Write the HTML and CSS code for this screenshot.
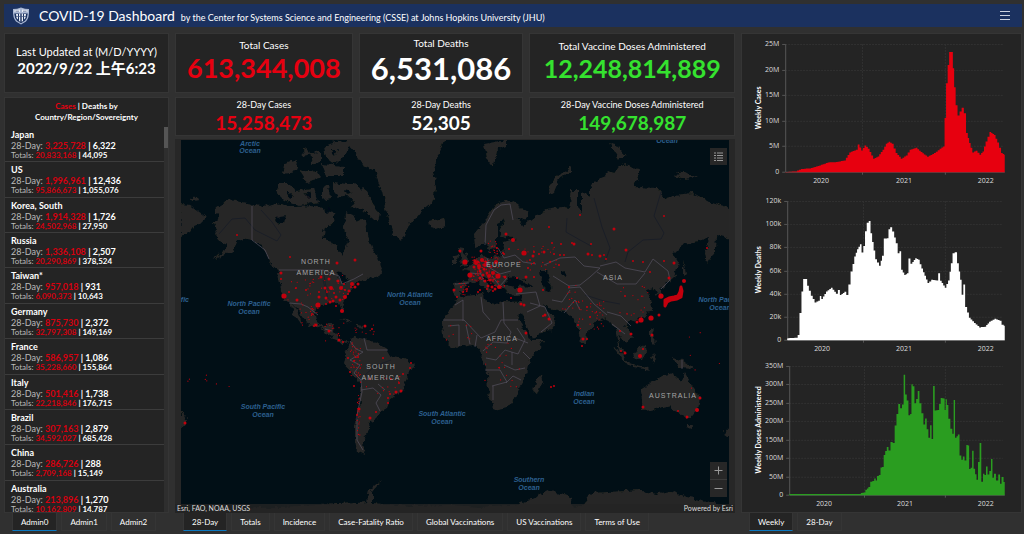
FILE: index.html
```html
<!DOCTYPE html>
<html lang="en">
<head>
<meta charset="utf-8">
<meta name="viewport" content="width=device-width, initial-scale=1">
<title>COVID-19 Dashboard</title>
<link rel="stylesheet" href="styles.css">
</head>
<body>
<header class="topbar">
  <svg class="logo" viewBox="0 0 18 18" aria-hidden="true">
    <path d="M1 2Q5 2 9 .5Q13 2 17 2Q17.500 11 14 14.500L9 17.500L4 14.500Q.5 11 1 2Z" fill="#a9b7d3"/>
    <path d="M2.300 6.500H15.700Q15.500 11 13 13.700L9 16.300L5 13.700Q2.500 11 2.300 6.500Z" fill="#1b315f"/>
    <path d="M2.500 3.200L8 2.500V5H2.500ZM10 2.500L15.500 3.200V5H10ZM4 7H6V12.500L4.500 11ZM7 6.500H8.300V14.800L7 14ZM9.700 6.500H11V14L9.700 14.800ZM12 7H14L13.500 11L12 12.500Z" fill="#e7ecf5"/>
    <path d="M3.500 4.200H7M11 4.200H14.500M4 9.500H14" stroke="#40557f" stroke-width=".7"/>
  </svg>
  <h1 class="title">COVID-19 Dashboard</h1>
  <p class="byline">by the Center for Systems Science and Engineering (CSSE) at Johns Hopkins University (JHU)</p>
  <button class="menu" aria-label="Menu"><svg viewBox="0 0 10 9"><path d="M0 .5H10M0 4.500H10M0 8.500H10"/></svg></button>
</header>

<main class="board">
  <section class="column">
    <div class="card tall updated">
      <p class="updated-label">Last Updated at (M/D/YYYY)</p>
      <p class="updated-value">2022/9/22 上午6:23</p>
    </div>
    <div class="card regions">
      <h2 class="regions-title"><span class="red">Cases</span> | Deaths by<br>Country/Region/Sovereignty</h2>
      <div class="scroller">
        <ul class="region-list" id="regions"></ul>
        <div class="track"><div class="thumb"></div></div>
      </div>
    </div>
    <nav class="tabs">
      <button class="tab active">Admin0</button><button class="tab">Admin1</button><button class="tab">Admin2</button>
    </nav>
  </section>

  <section class="column">
    <div class="stats tall">
      <div class="card stat"><h2>Total Cases</h2><p class="huge red">613,344,008</p></div>
      <div class="card stat"><h2>Total Deaths</h2><p class="giant">6,531,086</p></div>
      <div class="card stat"><h2>Total Vaccine Doses Administered</h2><p class="large green">12,248,814,889</p></div>
    </div>
    <div class="stats short">
      <div class="card stat"><h2>28-Day Cases</h2><p class="medium red">15,258,473</p></div>
      <div class="card stat"><h2>28-Day Deaths</h2><p class="medium">52,305</p></div>
      <div class="card stat"><h2>28-Day Vaccine Doses Administered</h2><p class="medium green">149,678,987</p></div>
    </div>
    <div class="map">
      <svg class="world" viewBox="181 140 548 373" preserveAspectRatio="xMidYMid slice" role="img" aria-label="World map of cases">
        <defs>
          <filter id="coast" x="0" y="0" width="100%" height="100%">
            <feTurbulence type="fractalNoise" baseFrequency=".16" numOctaves="3" seed="4"/>
            <feDisplacementMap in="SourceGraphic" scale="7" xChannelSelector="R" yChannelSelector="G"/>
          </filter>
        </defs>
        <rect x="181" y="140" width="548" height="373" fill="#010f16"/>
        <g filter="url(#coast)">
          <rect x="170" y="130" width="570" height="390" fill="none"/>
          <g fill="#272725">
            <path d="M252 204L240 202L228 199L215 210L220 217L213 222L217 230L215 235L222 243L228 245L225 250L213 259L232 251L237 240L243 238L253 240L262 246L270 262L278 271L280 285L283 297L290 304L293 312L302 325L300 316L295 308L292 304L300 312L307 323L317 328L328 333L335 340L345 344L350 342L342 340L337 335L333 331L334 323L328 323L325 328L318 325L316 314L318 306L328 304L338 303L342 313L345 312L343 303L347 295L352 288L358 283L367 278L376 277L383 273L380 262L373 250L366 230L365 218L357 222L352 215L345 213L344 228L348 243L342 256L336 246L323 238L325 228L335 222L333 212L315 206L295 207L275 203L263 207Z"/>
            <path d="M280 184L290 184L296 192L314 188L318 202L300 206L284 200L278 194Z"/>
            <path d="M284 164L298 160L296 172L282 174ZM300 172L316 170L322 178L306 182ZM310 154L320 150L320 162L312 164ZM322 164L344 166L344 176L326 176ZM324 146L336 142L352 141L346 156L334 164L326 158ZM322 188L328 184L330 198L322 200ZM303 150L308 147L310 154L304 156Z"/>
            <path d="M334 182L346 184L356 184L366 192L372 202L380 214L378 222L368 214L358 208L350 206L354 200L346 196L340 198L334 192Z"/>
            <path d="M345 138L445 138L438 155L433 172L436 185L432 203L420 212L407 228L401 242L393 235L388 218L382 192L374 170L362 164Z"/>
            <path d="M429 221L444 218L446 226L436 229L430 227Z"/>
            <path d="M180 204L190 205L206 217L199 224L194 226L190 232L181 237Z"/>
            <path d="M191 198L197 196L198 200L192 201Z"/>
            <path d="M350 342L355 337L372 340L388 350L392 357L407 360L414 366L407 377L403 390L390 400L387 408L380 412L378 419L370 421L368 433L363 443L365 455L357 451L355 440L355 427L360 403L360 382L350 372L344 362L347 352Z"/>
            <path d="M340 319L350 321L353 324L346 322ZM356 325L364 326L364 329L356 328Z"/>
            <path d="M475 247L474 234L487 218L497 203L510 200L530 213L527 220L517 217L523 227L537 215L547 210L560 207L569 209L572 190L577 190L577 207L582 212L582 192L590 195L590 187L600 177L610 173L625 163L640 171L634 187L657 188L665 198L673 195L693 193L710 202L735 210L735 240L717 235L716 250L707 264L705 252L710 238L697 242L683 245L673 255L679 263L674 277L665 285L660 290L663 298L658 297L655 288L647 290L650 298L652 308L645 317L630 322L625 325L633 336L627 343L620 335L618 342L626 354L619 351L615 329L607 318L598 320L587 333L585 344L580 340L576 324L570 316L563 311L548 308L543 304L549 315L557 320L550 330L532 338L521 312L518 320L525 330L530 340L544 340L540 348L530 360L528 371L520 385L515 398L507 408L494 411L488 392L487 374L480 350L472 345L457 348L450 345L443 337L442 323L450 308L458 297L454 294L453 282L468 281L471 272L463 270L473 263L482 253L487 259L503 255L504 242L517 238L508 236L502 239L499 229L505 220L497 224L497 242L490 252L485 243Z"/>
            <path d="M458 247L464 248L468 261L468 265L459 266L462 259ZM452 257L458 255L457 263L452 263Z"/>
            <path d="M549 195L548 188L556 176L570 167L570 171L559 180L554 192ZM484 144L506 140L506 146L496 150L493 166L487 158ZM609 143L618 146L626 156L619 159ZM675 174L685 172L696 178L684 180ZM684 260L687 274L684 276Z"/>
            <path d="M541 374L542 381L537 394L533 392L535 382Z"/>
            <path d="M640 390L642 411L652 410L667 406L680 414L690 420L698 410L700 397L692 385L685 373L682 382L675 378L673 373L665 375L653 382Z"/>
            <path d="M687 424L692 424L690 429L687 428ZM723 433L730 425L734 428L727 436ZM181 411L187 419L184 427L180 430Z"/>
            <path d="M673 358L682 360L694 369L680 368ZM612 346L619 351L629 363L647 367L650 370L628 366ZM633 352L645 346L646 352L642 361L635 360ZM650 326L655 328L653 335L656 343L650 341ZM650 356L656 354L653 362Z"/>
            <path d="M357 503L366 502L369 490L382 480L372 492L372 503L410 506L450 505L480 507L520 504L535 497L550 490L572 498L574 509L582 506L592 493L640 490L655 494L670 491L690 498L730 508L730 520L180 520L180 512Z"/>
          </g>
          <g fill="#010f16">
            <path d="M458 296L483 293L486 301L497 305L503 301L520 302L521 296L508 295L504 287L499 289L486 276L483 278L492 291L489 293L478 281L467 284L463 292Z"/>
            <path d="M507 277L515 276L520 279L535 286L515 287L506 284ZM540 270L550 270L547 278L553 290L546 292L541 282ZM560 273L566 272L565 277Z"/>
            <path d="M276 218L286 216L284 224L278 222ZM336 270L344 275L350 280L342 283Z"/>
            <path d="M286 190L294 196L290 199ZM304 194L310 191L310 200ZM318 206L324 210L330 206L328 214ZM344 190L352 192L346 195ZM330 150L338 150L334 155Z"/>
          </g>
        </g>
        <g class="rivers"><path d="M219 234L232 219L245 218L255 230L277 241L281 235L272 222L261 210M567 218L566 232L580 240L591 246M594 198L602 227L610 248L605 262M661 192L654 216L664 233L661 239L643 240L628 252L625 262M323 280L328 300L324 275M585 295L604 301L620 304M391 360L375 366L365 375"/></g>
        <g class="borders"><path d="M252 206V240L265 250L269 259M279 270H323L339 276L342 284L354 279L363 274M289 303L301 304L308 307L318 315M325 329L332 331M350 341L356 349L363 352L350 360L360 365L354 373L361 380L362 392L357 415L357 440L363 450M364 338L367 350L388 350M361 390L373 388L381 395L376 403L380 411M378 384L385 390M485 245L486 225L494 210L501 205L510 204L513 220M498 248L504 258L515 255L523 262L536 264M487 258L490 268L500 274L511 271M470 273L481 274M478 266L484 282M492 276L500 286L507 278M455 284L469 283M443 320L464 320L481 338L495 332L501 320L518 320M455 305L463 300V321M481 297L483 312L490 320M503 302L504 323L511 332L507 343L493 342L483 351M517 328L525 340L518 354L505 350L496 360L486 358M485 370H500L507 382L492 386M493 386L493 400M506 383L513 376L521 380M504 365L515 370L525 368M448 326L459 325L459 346M466 325L470 344M477 335L475 347M544 265L560 258L575 257L584 266L600 268L590 277L580 285L569 286L553 276M600 266L616 262L625 268L645 272L653 259L668 271L670 280L661 289M597 272L617 284L636 284L645 273M568 288L580 287L594 304L607 315M552 300L562 302L570 290M564 313L575 300L580 310M530 303L545 307L552 323L541 332M516 294L536 292L540 306L527 312M607 312L621 316L631 326M612 324L625 334M682 360V369M515 338L528 343M523 352L530 359M512 352V365"/></g>
        <g id="cases" class="cases"></g>
        <path d="M665 300L669 298L674 297L678 296L680 292L681 287L682 291L681 297L677 299L671 300L667 302L665 306Z" class="japan"/>
        <g class="oceans">
          <text x="250" y="146">Arctic</text><text x="250" y="153">Ocean</text><text x="667" y="143">Ocean</text>
          <text x="249" y="306">North Pacific</text><text x="249" y="314">Ocean</text><text x="182" y="302">cific</text>
          <text x="410" y="297">North Atlantic</text><text x="410" y="305">Ocean</text>
          <text x="720" y="302">North Pacific</text><text x="720" y="310">Ocean</text>
          <text x="263" y="409">South Pacific</text><text x="263" y="417">Ocean</text>
          <text x="442" y="416">South Atlantic</text><text x="442" y="424">Ocean</text>
          <text x="584" y="396">Indian</text><text x="584" y="404">Ocean</text>
          <text x="529" y="482">Southern</text><text x="529" y="490">Ocean</text>
        </g>
        <g class="continents">
          <text x="316" y="264">NORTH</text><text x="316" y="275">AMERICA</text><text x="504" y="267">EUROPE</text><text x="613" y="280">ASIA</text>
          <text x="502" y="341">AFRICA</text><text x="381" y="369">SOUTH</text><text x="381" y="380">AMERICA</text><text x="673" y="398">AUSTRALIA</text>
        </g>
      </svg>
      <button class="legend" aria-label="Legend"><svg viewBox="0 0 9 9"><path d="M0 1H2M0 3.500H2M0 6H2M0 8.500H2M3 1H9M3 3.500H9M3 6H9M3 8.500H9"/></svg></button>
      <div class="zoom">
        <button aria-label="Zoom in"><svg viewBox="0 0 9 9"><path d="M.5 4.500H8.500M4.500 .5V8.500"/></svg></button>
        <button aria-label="Zoom out"><svg viewBox="0 0 9 9"><path d="M.5 4.500H8.500"/></svg></button>
      </div>
      <div class="credits"><span>Esri, FAO, NOAA, USGS</span><span>Powered by Esri</span></div>
    </div>
    <nav class="tabs">
      <button class="tab active">28-Day</button><button class="tab">Totals</button><button class="tab">Incidence</button><button class="tab">Case-Fatality Ratio</button><button class="tab">Global Vaccinations</button><button class="tab">US Vaccinations</button><button class="tab">Terms of Use</button>
    </nav>
  </section>

  <section class="column">
    <div class="card charts" id="charts"></div>
    <nav class="tabs">
      <button class="tab active">Weekly</button><button class="tab">28-Day</button>
    </nav>
  </section>
</main>
<script src="app.js"></script>
</body>
</html>
```
FILE: styles.css
```css
* { box-sizing: border-box; margin: 0; padding: 0; }
body {
  height: 100vh;
  padding: 4px 2px 3px 4px;
  display: flex;
  flex-direction: column;
  gap: 6px;
  overflow: hidden;
  background: #303030;
  color: #fff;
  font-family: Lato, "Noto Sans CJK SC", sans-serif;
  font-size: 9px;
}
button { font: inherit; color: inherit; border: 0; background: none; }
svg { display: block; }
.red { color: #e60010; }
.green { color: #35e22f; }

.topbar {
  height: 23px;
  flex: none;
  display: flex;
  align-items: center;
  padding: 0 12px 0 8px;
  background: #1b315f;
}
.logo { width: 18px; height: 18px; margin-right: 9px; }
.title { font-size: 14px; font-weight: 400; line-height: 23px; }
.byline { font-size: 9px; line-height: 12px; margin: 4px 0 0 6px; font-weight: 400; }
.menu { margin-left: auto; }
.menu svg { width: 10px; height: 9px; stroke: #ccd3e0; fill: none; }

.board {
  flex: 1;
  min-height: 0;
  display: grid;
  grid-template-columns: 165fr 560fr 281fr;
  gap: 6px;
}
.column { display: flex; flex-direction: column; min-width: 0; min-height: 0; }
.card { background: #242424; border: 1px solid #353535; }
.tall { height: 60px; flex: none; margin-bottom: 4px; }
.short { height: 39px; flex: none; margin-bottom: 3px; }

.updated { text-align: center; padding-top: 10px; white-space: nowrap; }
.updated-label { font-size: 11px; line-height: 15px; }
.updated-value { font-size: 15px; line-height: 19px; font-weight: 700; }

.regions { flex: 1; min-height: 0; display: flex; flex-direction: column; overflow: hidden; }
.regions-title { font-size: 8px; line-height: 11px; text-align: center; padding: 3px 0 4px; font-weight: 700; }
.scroller { flex: 1; min-height: 0; display: flex; }
.region-list { flex: 1; margin-bottom: -4px; display: flex; flex-direction: column; list-style: none; }
.region { flex: 1; padding: 2px 0 0 6px; border-bottom: 1px solid #3c3c3c; white-space: nowrap; color: #bbb; }
.region b { color: #fff; }
.region .red { color: #d6000f; }
.region h3 { font-size: 9px; line-height: 11px; color: #fff; }
.recent { font-size: 9px; line-height: 11px; }
.totals { font-size: 8px; line-height: 8px; }
.track { width: 4px; background: #2e2e2e; }
.thumb { height: 21px; background: #555; }

.stats { display: grid; grid-template-columns: 178fr 165fr 206fr; gap: 6px; }
.stat { display: flex; flex-direction: column; align-items: center; justify-content: center; white-space: nowrap; font-weight: 700; }
.tall .stat { padding-bottom: 3px; }
.stat h2 { font-size: 10px; line-height: 13px; font-weight: 400; }
.short h2 { font-size: 9px; line-height: 12px; }
.huge { font-size: 27px; line-height: 32px; }
.giant { font-size: 31px; line-height: 36px; }
.large { font-size: 25px; line-height: 30px; }
.medium { font-size: 19px; line-height: 24px; }

.map { position: relative; flex: 1; min-height: 0; padding: 1px 6px 0; background: #272727; }
.world { width: 100%; height: 100%; }
.rivers, .borders { fill: none; stroke: #1a1e26; }
.borders { stroke: #565260; stroke-width: 0.7; stroke-linejoin: round; }
.cases { fill: #c3000d; }
.japan { fill: #c3000d; stroke: #c3000d; stroke-width: 3; stroke-linejoin: round; }
.oceans text { font: italic bold 7px "Liberation Sans", sans-serif; fill: #2d6090; text-anchor: middle; }
.continents text { font: 7px "Liberation Sans", sans-serif; fill: #a5a5a5; text-anchor: middle; letter-spacing: 1px; }
.legend, .zoom button { width: 17px; height: 17px; display: grid; place-items: center; background: #272727; }
.legend { position: absolute; top: 9px; right: 8px; }
.legend svg, .zoom svg { width: 9px; height: 9px; stroke: #999; fill: none; }
.zoom { position: absolute; right: 8px; bottom: 16px; display: grid; gap: 1px; background: #3a3a3a; }
.credits {
  position: absolute; left: 0; right: 0; bottom: 0;
  display: flex; justify-content: space-between;
  padding: 0 2px; font-size: 7px; line-height: 9px;
  background: rgba(36, 36, 36, 0.8); color: #ddd;
}

.tabs { flex: none; display: flex; gap: 4px; padding: 0 8px; height: 18px; }
.tab { padding: 0 8px; border: 1px solid #353535; border-width: 0 1px 1px; font-size: 8px; line-height: 16px; font-weight: 400; color: #fff; white-space: nowrap; }
.tab.active { background: #242424; border-bottom-color: #0a78c0; }

.charts { flex: 1; min-height: 0; display: flex; flex-direction: column; overflow: hidden; }
.chart { width: 100%; flex: 1; min-height: 0; }
.chart text { font: 7px "Open Sans", sans-serif; fill: #ddd; text-anchor: end; }
.chart .year { text-anchor: middle; }
.chart .axis-title { font: 7px Lato, sans-serif; font-weight: 700; fill: #fff; text-anchor: middle; }
.grid { stroke: #313131; stroke-dasharray: 2 1; fill: none; }
.axis { stroke: #555; fill: none; }
```
FILE: app.js
```js
const regions = [
  ["Japan", "3,225,728", "6,322", "20,833,168", "44,095"],
  ["US", "1,996,961", "12,436", "95,866,673", "1,055,076"],
  ["Korea, South", "1,914,328", "1,726", "24,502,968", "27,950"],
  ["Russia", "1,336,108", "2,507", "20,290,869", "378,524"],
  ["Taiwan*", "957,018", "931", "6,090,373", "10,643"],
  ["Germany", "875,730", "2,372", "32,797,308", "149,169"],
  ["France", "586,957", "1,086", "35,228,660", "155,864"],
  ["Italy", "501,416", "1,738", "22,218,846", "176,715"],
  ["Brazil", "307,163", "2,879", "34,592,027", "685,428"],
  ["China", "286,726", "288", "2,709,168", "15,149"],
  ["Australia", "213,896", "1,270", "10,162,809", "14,787"]
];
document.getElementById("regions").innerHTML = regions.map(([name, c, d, tc, td]) =>
  `<li class="region"><h3>${name}</h3><p class="recent">28-Day: <b class="red">${c}</b> <b>| ${d}</b></p><p class="totals">Totals: <b class="red">${tc}</b> <b>| ${td}</b></p></li>`
).join("");

// Each chart: top of its band, y of first and last tick, tick labels, axis x, year marks, outline in thirds of a pixel.
const charts = [
  { title: "Weekly Cases", color: "#e7000f", top: 34, height: 157, y0: 172, y1: 44, left: 785, right: 1005, years: [862, 945], names: [821, 904, 986], ox: 520, oy: 0, titleY: 108,
    ticks: ["0", "5M", "10M", "15M", "20M", "25M"],
    line: "797,517 828,515 845,508 870,506 900,497 925,488 950,487 975,482 990,458 1010,450 1016,434 1026,452 1036,437 1046,447 1062,477 1075,470 1090,450 1100,432 1108,426 1118,432 1130,460 1145,477 1160,467 1172,450 1190,444 1205,457 1224,471 1245,460 1262,447 1272,440 1276,355 1281,250 1286,195 1290,156 1297,156 1301,205 1305,262 1310,316 1316,347 1322,335 1329,324 1335,340 1342,400 1350,430 1360,458 1370,453 1382,465 1390,455 1400,425 1412,397 1425,406 1435,428 1447,460 1455,465" },
  { title: "Weekly Deaths", color: "#fff", top: 191, height: 165, y0: 340, y1: 201, left: 787, right: 1005, years: [863, 945], names: [822, 904, 986], ox: 745, oy: 190, titleY: 270,
    ticks: ["0", "20k", "40k", "60k", "80k", "100k", "120k"],
    line: "125,446 155,444 160,436 166,370 172,305 176,268 184,268 188,288 200,318 211,338 222,333 226,319 231,328 245,305 260,294 275,312 282,301 287,316 300,306 307,316 313,284 320,245 330,200 338,178 347,163 352,188 358,168 362,124 368,98 374,93 379,130 388,182 393,208 405,228 413,198 420,146 428,145 433,118 438,112 445,125 455,160 461,190 466,184 471,240 480,256 488,250 493,206 500,222 513,205 522,210 532,236 550,280 562,270 577,272 583,250 588,273 602,294 612,272 620,220 626,190 633,187 640,220 648,270 653,315 658,284 664,352 675,384 690,400 706,413 722,411 735,396 752,387 767,393 774,405 780,408" },
  { title: "Weekly Doses Administered", color: "#2a9d20", top: 356, height: 157, y0: 496, y1: 367, left: 789, right: 1005, years: [864, 945], names: [824, 905, 986], ox: 745, oy: 355, titleY: 431,
    ticks: ["0", "50M", "100M", "150M", "200M", "250M", "300M", "350M"],
    line: "131,421 345,421 350,418 358,416 364,408 372,400 379,384 385,382 390,374 394,380 398,367 405,364 408,341 414,340 418,304 428,280 433,290 440,265 446,268 452,215 457,180 463,150 468,163 474,152 478,62 483,122 488,140 493,184 498,180 501,91 506,97 511,148 516,135 521,111 526,148 533,178 538,212 543,194 548,226 553,252 558,214 562,256 567,96 572,170 580,168 590,132 598,134 601,168 604,136 608,153 613,195 620,225 625,240 628,138 633,252 641,242 647,305 652,318 656,308 662,320 667,274 671,275 675,346 680,342 684,291 689,345 697,378 702,325 707,268 712,384 717,360 721,364 726,338 731,362 736,352 741,316 745,372 750,360 757,380 764,362 768,390 773,370 780,385" }
];

// Turns an outline into weekly steps.
function steps(c) {
  const pts = c.line.split(" ").map(p => p.split(",").map(Number));
  const weeks = [];
  pts.forEach((p, i) => {
    const q = pts[i + 1];
    if (!q) { weeks.push(p); return; }
    const n = Math.max(1, Math.round((q[0] - p[0]) / 5));
    for (let k = 0; k < n; k++) weeks.push([p[0] + (q[0] - p[0]) * k / n, p[1] + (q[1] - p[1]) * k / n]);
  });
  let d = `M${c.left} ${c.y0 + 0.5}`;
  weeks.forEach((p, i) => {
    const next = weeks[i + 1];
    const end = next ? c.ox + (p[0] + next[0]) / 6 : c.right;
    d += `V${(c.oy + p[1] / 3).toFixed(1)}H${end.toFixed(1)}`;
  });
  return d + `V${c.y0 + 0.5}Z`;
}

document.getElementById("charts").innerHTML = charts.map(c => {
  const gap = (c.y0 - c.y1) / (c.ticks.length - 1);
  let grid = "", marks = "", labels = "";
  c.ticks.forEach((t, i) => {
    const y = Math.round(c.y0 - gap * i) + 0.5;
    if (i) grid += `M${c.left} ${y}H${c.right - 2}`;
    marks += `M${c.left - 3} ${y}H${c.left}`;
    labels += `<text x="${c.left - 6}" y="${y + 2}">${t}</text>`;
  });
  c.years.forEach(x => { grid += `M${x + 0.5} ${c.y1}V${c.y0}`; marks += `M${x + 0.5} ${c.y0}v3`; });
  c.names.forEach((x, i) => { labels += `<text class="year" x="${x}" y="${c.y0 + 11}">${2020 + i}</text>`; });
  return `<svg class="chart" style="flex-grow:${c.height}" viewBox="742 ${c.top} 279 ${c.height}" role="img" aria-label="${c.title}">
    <path class="grid" d="${grid}"/><path class="axis" d="${marks}M${c.left + 0.5} ${c.y1}V${c.y0 + 0.5}H${c.right}"/>
    <path d="${steps(c)}" fill="${c.color}"/>${labels}
    <text class="axis-title" transform="translate(761 ${c.titleY}) rotate(-90)">${c.title}</text></svg>`;
}).join("");

// Case circles grouped by radius.
const circles = {
  2.6: "284,296 318,305 465,262 470,275 498,276 520,290 524,253 661,296 651,318 641,320",
  2: "331,288 341,288 352,284 345,297 342,311 499,287 513,240 493,273 482,260 489,276 485,265 640,356 684,281 496,262 697,410 476,263 479,266",
  1.5: "281,273 297,300 333,301 329,279 338,281 325,288 336,297 349,291 355,287 319,297 326,298 330,302 340,300 358,284 337,263 355,260 321,277 474,267 478,262 479,268 484,269 487,273 480,278 485,281 488,286 454,290 460,251 481,251 506,234 505,277 492,287 495,289 521,304 524,305 365,326 396,392 401,391 370,418 359,409 339,340 329,331 316,325 659,315 631,334 625,353 583,339 652,335 687,417 643,407 700,398 626,250 588,254 574,244 544,252 533,256 614,229 545,315 549,319 185,423 526,333 600,256 637,322 669,278 674,263 526,277 475,261 480,271 483,275 490,280 486,262",
  1: "281,279 289,292 306,290 296,288 319,292 327,292 345,290 351,287 336,306 326,304 344,284 334,293 348,294 290,257 237,235 354,386 350,372 388,398 390,394 388,403 399,383 391,379 403,374 410,368 411,363 383,358 358,357 370,379 348,358 357,415 343,342 354,361 372,329 376,412 314,326 312,314 517,278 504,254 509,249 503,253 497,248 532,229 549,227 552,243 561,244 534,252 539,254 530,260 534,263 528,268 550,262 559,265 564,255 572,243 554,254 591,244 592,255 604,255 606,259 560,255 582,346 587,339 578,325 620,331 621,351 643,349 678,411 671,298 551,387 554,386 543,316 511,298 569,287 587,307 590,317 664,216 650,272 580,215 633,261 643,262 664,261 625,296 707,248 534,277 543,290 478,292 487,289 480,290 493,291 461,287 463,292 467,289 457,297"
};
let dots = "";
for (const [r, list] of Object.entries(circles))
  list.split(" ").forEach(p => { const [x, y] = p.split(","); dots += `<circle cx="${x}" cy="${y}" r="${r}"/>`; });

// Minor places are scattered inside boxes: x, y, width, height, count.
let seed = 7;
const random = () => (seed = (seed * 16807) % 2147483647) / 2147483647;
[[288, 274, 60, 28, 34], [300, 303, 18, 24, 22], [472, 257, 26, 25, 80], [486, 240, 12, 14, 16], [518, 246, 40, 26, 26], [577, 300, 28, 30, 34],
 [620, 286, 28, 32, 18], [350, 342, 12, 40, 36], [356, 376, 44, 20, 12], [455, 283, 14, 12, 14], [484, 330, 36, 60, 24], [446, 325, 26, 18, 9],
 [357, 395, 3, 40, 20], [490, 276, 16, 14, 16], [558, 280, 20, 30, 12], [355, 325, 20, 10, 10], [185, 375, 55, 14, 7], [684, 330, 40, 60, 6], [325, 322, 20, 20, 12]
].forEach(([x, y, w, h, n]) => {
  for (let i = 0; i < n; i++) dots += `<circle cx="${(x + random() * w).toFixed(1)}" cy="${(y + random() * h).toFixed(1)}" r=".6"/>`;
});
document.getElementById("cases").innerHTML = dots;
```
